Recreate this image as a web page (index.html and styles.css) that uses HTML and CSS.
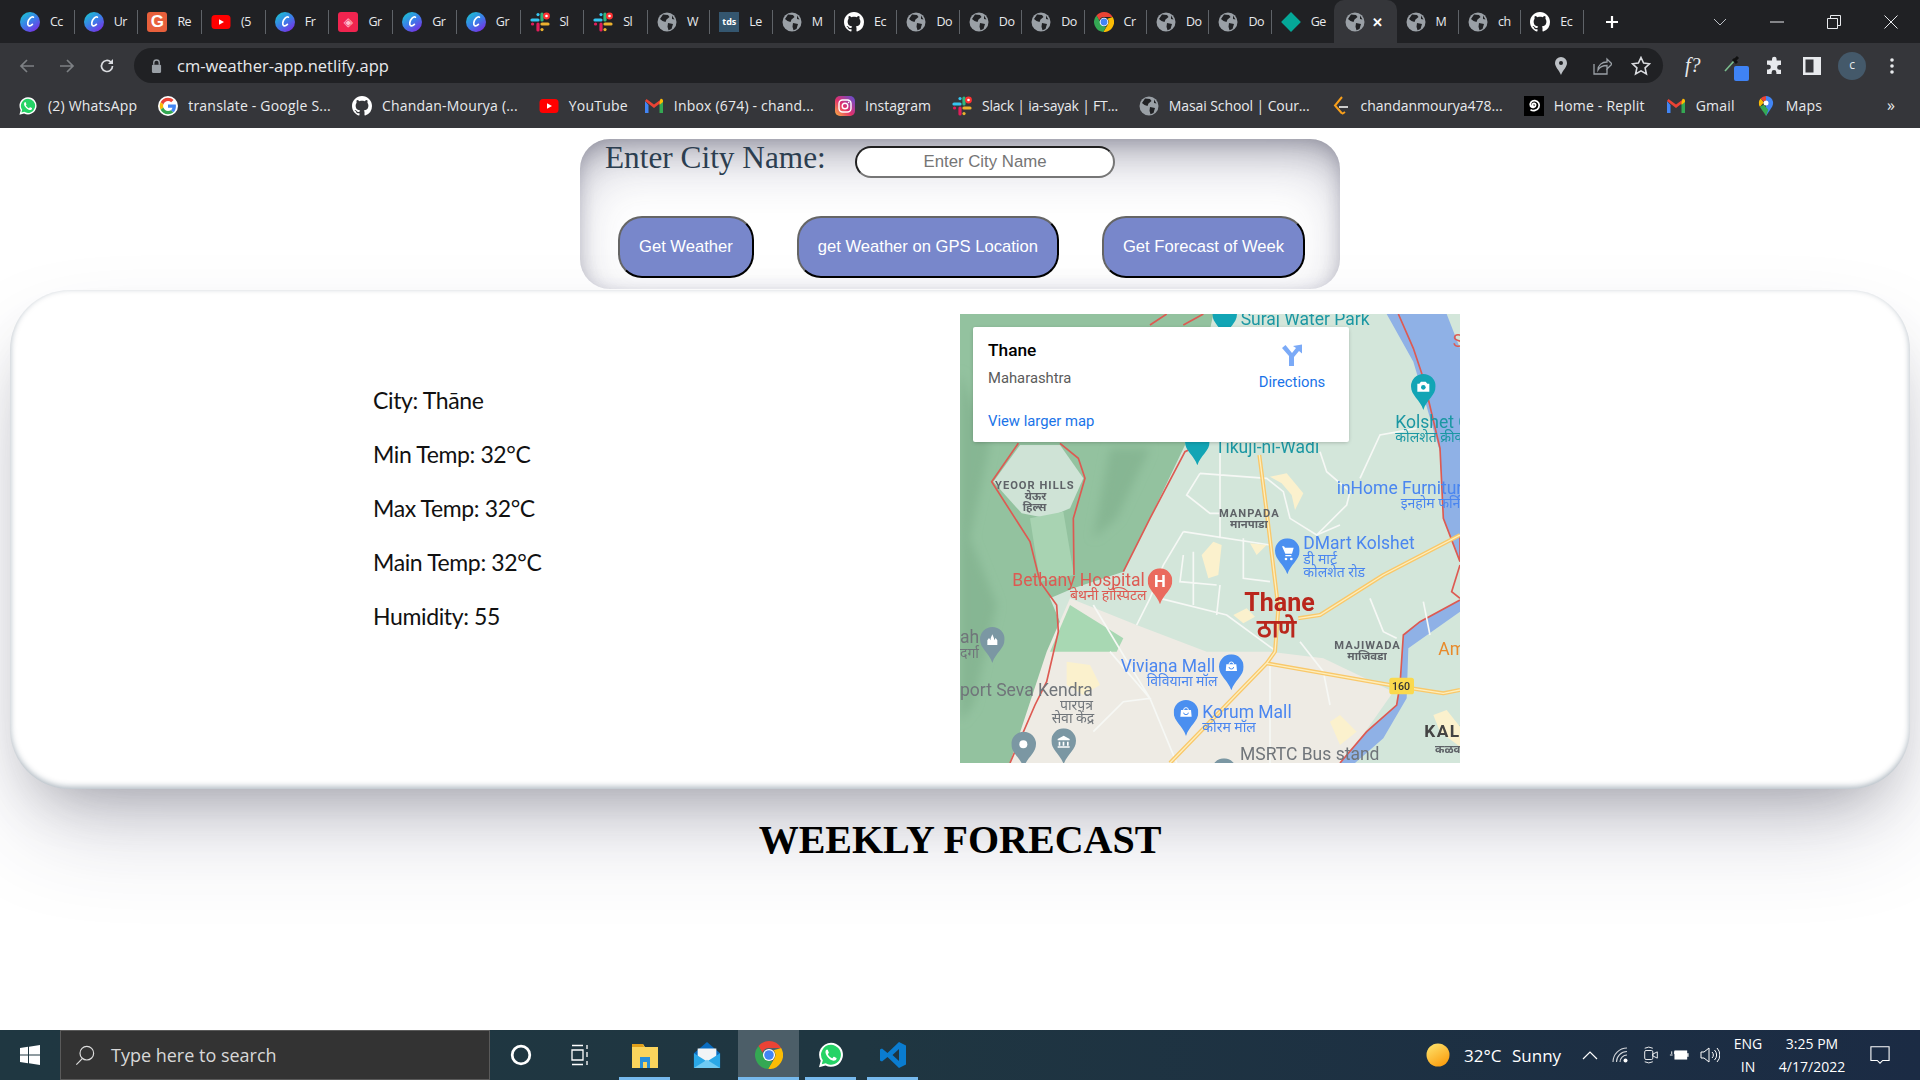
FILE: index.html
```html
<!DOCTYPE html>
<html lang="en">
<head>
<meta charset="utf-8">
<title>Weather App</title>
<link rel="stylesheet" href="styles.css">
</head>
<body>
<svg class="defs" width="0" height="0" aria-hidden="true">
  <defs>
    <filter id="soft" x="-20%" y="-20%" width="140%" height="140%"><feGaussianBlur stdDeviation="14"/></filter>
    <linearGradient id="canvaG" x1="0.1" y1="0" x2="0.8" y2="1"><stop offset="0" stop-color="#19c8cf"/><stop offset="0.5" stop-color="#3a7fe8"/><stop offset="1" stop-color="#7b2be3"/></linearGradient>
    <linearGradient id="igG" x1="0" y1="1" x2="1" y2="0"><stop offset="0" stop-color="#fdb442"/><stop offset="0.45" stop-color="#e1306c"/><stop offset="1" stop-color="#5b51d8"/></linearGradient>
    <linearGradient id="sunG" x1="0.2" y1="0" x2="0.8" y2="1"><stop offset="0" stop-color="#fde16a"/><stop offset="1" stop-color="#fb9a0a"/></linearGradient>
    <symbol id="canva" viewBox="0 0 20 20"><circle cx="10" cy="10" r="10" fill="url(#canvaG)"/><path d="M13.4 5.2C11.6 3.8 8.4 7.2 7.8 10.6c-.5 3 1.6 4.6 4.6 1.8" fill="none" stroke="#fff" stroke-width="1.7" stroke-linecap="round"/></symbol>
    <symbol id="globe" viewBox="0 0 20 20"><circle cx="10" cy="10" r="9.5" fill="#9aa0a6"/><path d="M6 2.5l5 .5 1.5 2-3 2.5-1 2.5-3-1L3 7zM11 11l5 1-1.5 5-3 1.2-1-3.5zM15 3.5l2.5 4-2.5-.6z" fill="#202124"/></symbol>
    <symbol id="github" viewBox="0 0 16 16"><path fill="#fff" d="M8 0C3.58 0 0 3.58 0 8c0 3.54 2.29 6.53 5.47 7.59.4.07.55-.17.55-.38 0-.19-.01-.82-.01-1.49-2.01.37-2.53-.49-2.69-.94-.09-.23-.48-.94-.82-1.13-.28-.15-.68-.52-.01-.53.63-.01 1.08.58 1.23.82.72 1.21 1.87.87 2.33.66.07-.52.28-.87.51-1.07-1.78-.2-3.64-.89-3.64-3.95 0-.87.31-1.59.82-2.15-.08-.2-.36-1.02.08-2.12 0 0 .67-.21 2.2.82.64-.18 1.32-.27 2-.27.68 0 1.36.09 2 .27 1.53-1.04 2.2-.82 2.2-.82.44 1.1.16 1.92.08 2.12.51.56.82 1.27.82 2.15 0 3.07-1.87 3.75-3.65 3.95.29.25.54.73.54 1.48 0 1.07-.01 1.93-.01 2.2 0 .21.15.46.55.38A8.013 8.013 0 0016 8c0-4.42-3.58-8-8-8z"/></symbol>
    <symbol id="google" viewBox="-5 -5 58 58"><circle cx="24" cy="24" r="29" fill="#fff"/><path fill="#EA4335" d="M24 9.5c3.54 0 6.71 1.22 9.21 3.6l6.85-6.85C35.9 2.38 30.47 0 24 0 14.62 0 6.51 5.38 2.56 13.22l7.98 6.19C12.43 13.72 17.74 9.5 24 9.5z"/><path fill="#4285F4" d="M46.98 24.55c0-1.57-.15-3.09-.38-4.55H24v9.02h12.94c-.58 2.96-2.26 5.48-4.78 7.18l7.73 6c4.51-4.18 7.09-10.36 7.09-17.65z"/><path fill="#FBBC05" d="M10.53 28.59c-.48-1.45-.76-2.99-.76-4.59s.27-3.14.76-4.59l-7.98-6.19C.92 16.46 0 20.12 0 24c0 3.88.92 7.54 2.56 10.78l7.97-6.19z"/><path fill="#34A853" d="M24 48c6.48 0 11.93-2.13 15.89-5.81l-7.73-6c-2.15 1.45-4.92 2.3-8.16 2.3-6.26 0-11.57-4.22-13.47-9.91l-7.98 6.19C6.51 42.62 14.62 48 24 48z"/></symbol>
    <symbol id="yt" viewBox="0 0 20 20"><rect x="0.5" y="3" width="19" height="14" rx="3.5" fill="#f00"/><path d="M8 7.2v5.6l5-2.8z" fill="#fff"/></symbol>
    <symbol id="slack" viewBox="0 0 20 20"><g fill="none" stroke-width="3.2" stroke-linecap="round"><path d="M2 8h6" stroke="#36c5f0"/><path d="M8 2.5v.1" stroke="#36c5f0"/><path d="M12 2v6" stroke="#2eb67d"/><path d="M12 12h6" stroke="#ecb22e"/><path d="M12 17.5v.1" stroke="#ecb22e"/><path d="M8 12v6" stroke="#e01e5a"/><path d="M2.5 12h.1" stroke="#e01e5a"/></g><circle cx="16.5" cy="4" r="3.4" fill="#f33"/><circle cx="16.5" cy="4" r="1.3" fill="#fff"/></symbol>
    <symbol id="gmail" viewBox="0 0 20 20"><path d="M1 5v12h3.5V9z" fill="#4285f4"/><path d="M15.5 9v8H19V5z" fill="#34a853"/><path d="M1 5l9 7 9-7-1.5-2L10 8.5 2.5 3z" fill="#ea4335"/><path d="M15.5 6.5V9L19 6V5c0-2-1.5-2.5-2.5-2z" fill="#fbbc04"/></symbol>
    <symbol id="wa" viewBox="0 0 24 24"><path d="M12 1.5A10.3 10.3 0 0 0 3.2 17L1.7 22.5l5.6-1.5A10.3 10.3 0 1 0 12 1.5z" fill="#fff"/><path d="M12 3.3a8.5 8.5 0 0 0-7 13.3l-.9 3.3 3.4-.9A8.5 8.5 0 1 0 12 3.3z" fill="#25d366"/><path d="M8.7 7.2c-.3 0-.8.2-1.1.8-.6 1.2-.5 2.9 1 5 1.6 2.3 3.7 3.6 5.6 3.9 1.2.1 2.2-.5 2.5-1.4.2-.5.1-.9 0-1l-2-1c-.2-.1-.4 0-.5.1l-.8 1c-.1.2-.3.2-.5.1-1.6-.7-2.7-1.8-3.5-3.2-.1-.2 0-.3.1-.5l.6-.7c.1-.2.1-.3 0-.5l-.8-2c-.2-.5-.4-.6-.6-.6z" fill="#fff"/></symbol>
    <symbol id="chrome" viewBox="0 0 24 24"><path d="M12 0a12 12 0 0 1 10.4 6H12a6 6 0 0 0-5.7 4.1L3 4.2A12 12 0 0 1 12 0z" fill="#ea4335"/><path d="M22.4 6A12 12 0 0 1 11.2 24l5.4-9A6 6 0 0 0 16 8z" fill="#fbbc04"/><path d="M3 4.2l5 8.8a6 6 0 0 0 7 4.2L11.2 24A12 12 0 0 1 3 4.2z" fill="#34a853"/><circle cx="12" cy="12" r="5.2" fill="#fff"/><circle cx="12" cy="12" r="4.1" fill="#4285f4"/></symbol>
    <symbol id="ig" viewBox="0 0 20 20"><rect width="20" height="20" rx="5" fill="url(#igG)"/><rect x="4" y="4" width="12" height="12" rx="3.5" fill="none" stroke="#fff" stroke-width="1.4"/><circle cx="10" cy="10" r="2.8" fill="none" stroke="#fff" stroke-width="1.4"/><circle cx="13.6" cy="6.4" r=".8" fill="#fff"/></symbol>
    <symbol id="leet" viewBox="0 0 20 20"><path d="M11 1L4 9.5l7 8" fill="none" stroke="#f89f1b" stroke-width="2"/><path d="M8 11h9" stroke="#ccc" stroke-width="2"/><path d="M14 16l-3 2" stroke="#f89f1b" stroke-width="2"/></symbol>
    <symbol id="replit" viewBox="0 0 20 20"><rect width="20" height="20" fill="#000"/><path d="M10 10.5a1.6 1.6 0 1 1 1.6-1.6c0 2.5-3.6 3.4-5 1.2C5.2 7.5 7.6 4.2 11 4.6c3.4.4 5.2 4 3.7 7-1.5 3-5.6 4-8.2 2" fill="none" stroke="#fff" stroke-width="1.8"/></symbol>
    <symbol id="maps" viewBox="0 0 20 24"><path d="M10 0a8.5 8.5 0 0 1 7.3 12.8L10 24z" fill="#4285f4"/><path d="M10 0a8.5 8.5 0 0 0-6.5 3l3.7 3.6L10 5z" fill="#ea4335"/><path d="M3.5 3A8.5 8.5 0 0 0 2.7 12.8l4.7-5z" fill="#fbbc04"/><path d="M2.7 12.800C5 17 8 20 10 24l2.8-7.500-5.400-6z" fill="#34a853"/><circle cx="10" cy="8.5" r="3" fill="#fff"/></symbol>
    <symbol id="pin" viewBox="0 0 74 108"><path d="M37 0a37 37 0 0 1 37 37c0 28-27 40-37 71C27 77 0 65 0 37A37 37 0 0 1 37 0z"/></symbol>
    <symbol id="bag" viewBox="0 0 36 32"><path d="M3 10h30l2 20H1z" fill="#fff"/><path d="M11 10a7 7 0 0 1 14 0" fill="none" stroke="#fff" stroke-width="3"/><path d="M11 18a7 6 0 0 0 14 0" fill="none" stroke="#4a8ff0" stroke-width="3"/></symbol>
  </defs>
</svg>

<header class="chrome">
  <div class="tabstrip">
    <div class="tab"><svg class="fav"><use href="#canva"/></svg><span class="tabname">Cc</span></div>
    <div class="tab"><svg class="fav"><use href="#canva"/></svg><span class="tabname">Ur</span></div>
    <div class="tab"><span class="fav gsq">G</span><span class="tabname">Re</span></div>
    <div class="tab"><svg class="fav"><use href="#yt"/></svg><span class="tabname">(5</span></div>
    <div class="tab"><svg class="fav"><use href="#canva"/></svg><span class="tabname">Fr</span></div>
    <div class="tab"><span class="fav pinksq">◈</span><span class="tabname">Gr</span></div>
    <div class="tab"><svg class="fav"><use href="#canva"/></svg><span class="tabname">Gr</span></div>
    <div class="tab"><svg class="fav"><use href="#canva"/></svg><span class="tabname">Gr</span></div>
    <div class="tab"><svg class="fav"><use href="#slack"/></svg><span class="tabname">Sl</span></div>
    <div class="tab"><svg class="fav"><use href="#slack"/></svg><span class="tabname">Sl</span></div>
    <div class="tab"><svg class="fav"><use href="#globe"/></svg><span class="tabname">W</span></div>
    <div class="tab"><span class="fav tds">tds</span><span class="tabname">Le</span></div>
    <div class="tab"><svg class="fav"><use href="#globe"/></svg><span class="tabname">M</span></div>
    <div class="tab"><svg class="fav"><use href="#github"/></svg><span class="tabname">Ec</span></div>
    <div class="tab"><svg class="fav"><use href="#globe"/></svg><span class="tabname">Do</span></div>
    <div class="tab"><svg class="fav"><use href="#globe"/></svg><span class="tabname">Do</span></div>
    <div class="tab"><svg class="fav"><use href="#globe"/></svg><span class="tabname">Do</span></div>
    <div class="tab"><svg class="fav"><use href="#chrome"/></svg><span class="tabname">Cr</span></div>
    <div class="tab"><svg class="fav"><use href="#globe"/></svg><span class="tabname">Do</span></div>
    <div class="tab"><svg class="fav"><use href="#globe"/></svg><span class="tabname">Do</span></div>
    <div class="tab tab-noline"><span class="fav diamond"></span><span class="tabname">Ge</span></div>
    <div class="tab tab-active"><svg class="fav"><use href="#globe"/></svg><span class="tabclose">✕</span></div>
    <div class="tab"><svg class="fav"><use href="#globe"/></svg><span class="tabname">M</span></div>
    <div class="tab"><svg class="fav"><use href="#globe"/></svg><span class="tabname">ch</span></div>
    <div class="tab"><svg class="fav"><use href="#github"/></svg><span class="tabname">Ec</span></div>
    <svg class="newtab" viewBox="0 0 16 16"><path d="M8 2v12M2 8h12" stroke="#fff" stroke-width="2.2"/></svg>
    <div class="winctl">
      <svg class="wc wc-chev" viewBox="0 0 14 8"><path d="M1 1l6 6 6-6" fill="none" stroke="#bdc1c6"/></svg>
      <svg class="wc wc-min" viewBox="0 0 14 14"><path d="M0 7h14" stroke="#e8eaed"/></svg>
      <svg class="wc wc-max" viewBox="0 0 14 14"><path d="M.5 3.5h10v10H.5zM3.5 3V.5h10v10H11" fill="none" stroke="#e8eaed"/></svg>
      <svg class="wc wc-close" viewBox="0 0 14 14"><path d="M.5.5l13 13M13.5.5l-13 13" stroke="#e8eaed"/></svg>
    </div>
  </div>

  <div class="toolbar">
    <svg class="navbtn" viewBox="0 0 16 16"><path d="M15 8H2M8 2L2 8l6 6" fill="none" stroke="#7d8084" stroke-width="1.7"/></svg>
    <svg class="navbtn" viewBox="0 0 16 16"><path d="M1 8h13M8 2l6 6-6 6" fill="none" stroke="#7d8084" stroke-width="1.7"/></svg>
    <svg class="navbtn" viewBox="0 0 16 16"><path d="M13.5 8a5.5 5.5 0 1 1-1.6-3.9" fill="none" stroke="#dadce0" stroke-width="1.7"/><path d="M14 1v5H9z" fill="#dadce0"/></svg>
    <div class="omnibox">
      <svg class="lock" viewBox="0 0 12 15"><path d="M3 6V4a3 3 0 0 1 6 0v2" fill="none" stroke="#9aa0a6" stroke-width="1.5"/><rect x="1" y="6" width="10" height="9" rx="1.2" fill="#9aa0a6"/></svg>
      <span class="url">cm-weather-app.netlify.app</span>
      <svg class="omni-ic omni-pin" viewBox="0 0 12 18"><path d="M6 0a6 6 0 0 1 6 6c0 4-4 7-6 12C4 13 0 10 0 6a6 6 0 0 1 6-6z" fill="#bdc1c6"/><circle cx="6" cy="6" r="2" fill="#202124"/></svg>
      <svg class="omni-ic omni-share" viewBox="0 0 20 20"><path d="M2 8v10h13v-5" fill="none" stroke="#9aa0a6" stroke-width="1.3"/><path d="M6 14c0-5 4-8 9-8V3l5 5-5 5V9.5c-4 0-7 1-9 4.5z" fill="none" stroke="#9aa0a6" stroke-width="1.3"/></svg>
      <svg class="omni-ic omni-star" viewBox="0 0 20 20"><path d="M10 1.5l2.6 5.6 6 .7-4.500 4.100 1.300 6.100-5.400-3.100-5.400 3.100 1.300-6.100L1.400 7.800l6-.7z" fill="none" stroke="#dadce0" stroke-width="1.6"/></svg>
    </div>
    <div class="exts">
      <span class="fq">f?</span>
      <span class="dropper"><svg class="dropper-ic" viewBox="0 0 18 18"><path d="M2 16L11 6" stroke="#7bbd8d" stroke-width="1.6"/><path d="M10 4l4 4M12 5l3-3" stroke="#111" stroke-width="3"/></svg><span class="bluesq"></span></span>
      <svg class="ext-ic puzzle" viewBox="0 0 20 20"><path d="M7 3a2.3 2.3 0 0 1 4.600 0v1.500H16V9h-1.500a2.400 2.400 0 0 0 0 4.800H16V18h-4.600v-1.500a2.400 2.400 0 0 0-4.800 0V18H2v-4.500h1.500a2.400 2.400 0 0 0 0-4.800H2V4.500h5z" fill="#e8eaed"/></svg>
      <svg class="ext-ic side" viewBox="0 0 18 18"><path d="M0 0h18v18H0zM2.500 2.500v13h8v-13z" fill="#e8eaed" fill-rule="evenodd"/></svg>
      <span class="avatar">c</span>
      <svg class="ext-ic menu" viewBox="0 0 4 16"><circle cx="2" cy="2" r="1.8" fill="#e8eaed"/><circle cx="2" cy="8" r="1.8" fill="#e8eaed"/><circle cx="2" cy="14" r="1.8" fill="#e8eaed"/></svg>
    </div>
  </div>

  <nav class="bookmarks">
    <a class="bm"><svg class="fav"><use href="#wa"/></svg>(2) WhatsApp</a>
    <a class="bm"><svg class="fav"><use href="#google"/></svg>translate - Google S...</a>
    <a class="bm"><svg class="fav"><use href="#github"/></svg>Chandan-Mourya (...</a>
    <a class="bm"><svg class="fav"><use href="#yt"/></svg>YouTube</a>
    <a class="bm bm-inbox"><svg class="fav"><use href="#gmail"/></svg>Inbox (674) - chand...</a>
    <a class="bm bm-ig"><svg class="fav"><use href="#ig"/></svg>Instagram</a>
    <a class="bm bm-slack"><svg class="fav"><use href="#slack"/></svg>Slack | ia-sayak | FT...</a>
    <a class="bm bm-masai"><svg class="fav"><use href="#globe"/></svg>Masai School | Cour...</a>
    <a class="bm bm-leet"><svg class="fav"><use href="#leet"/></svg>chandanmourya478...</a>
    <a class="bm"><svg class="fav"><use href="#replit"/></svg>Home - Replit</a>
    <a class="bm"><svg class="fav"><use href="#gmail"/></svg>Gmail</a>
    <a class="bm"><svg class="fav"><use href="#maps"/></svg>Maps</a>
    <span class="bm-more">»</span>
  </nav>
</header>

<main class="page">
  <form class="search">
    <div class="search-row">
      <label class="search-label">Enter City Name:</label>
      <input class="search-input" type="text" placeholder="Enter City Name">
    </div>
    <div class="search-btns">
      <button class="btn" type="button">Get Weather</button>
      <button class="btn" type="button">get Weather on GPS Location</button>
      <button class="btn" type="button">Get Forecast of Week</button>
    </div>
  </form>

  <section class="card">
    <div class="details">
      <p>City: Thāne</p>
      <p>Min Temp: 32°C</p>
      <p>Max Temp: 32°C</p>
      <p>Main Temp: 32°C</p>
      <p>Humidity: 55</p>
    </div>
    <div class="map">
      <svg class="map-svg" viewBox="30 27 1500 1347" preserveAspectRatio="none">
        <rect x="30" y="27" width="1500" height="1347" fill="#d3e6da"/>
        <path d="M30 27H790L705 420 600 640 520 800 370 850 300 880 350 1000 300 1040 180 1374H30z" fill="#93c29f"/>
        <path d="M30 200L120 420 60 700 140 900 70 1200 30 1250zM480 430L600 430 500 640 430 700z" fill="#86b693" filter="url(#soft)"/>
        <path d="M210 420H330L400 520 360 610 290 640 215 625 130 530z" fill="#cfe3d6"/>
        <path d="M240 640L340 620 372 810 270 830z" fill="#a8d3b2"/>
        <path d="M360 880L560 960 770 1040 960 1040 1120 1060 1330 1160 1180 1374H180L290 1040z" fill="#eeebe4"/>
        <path d="M300 1040L360 900 520 1000 500 1040z" fill="#a8d8b3"/>
        <path d="M1310 27H1490L1530 130V770L1480 640 1470 440 1390 170z" fill="#8fb1e6"/>
        <path d="M1530 885L1410 950 1360 990 1350 1140 1340 1200 1250 1280 1170 1374H1215L1300 1300 1370 1180 1375 1030 1530 920z" fill="#8fb1e6"/>
        <g fill="none" stroke="#dd5a52" stroke-width="5">
          <path d="M1345 27L1390 130 1420 220 1470 430 1480 640 1530 770 1530 690"/>
          <path d="M1530 885L1410 950 1360 990 1350 1140 1340 1200 1250 1280 1170 1374"/>
          <path d="M1530 780L1505 860 1530 880"/>
          <path d="M790 400L705 440 600 640 520 800M205 415L125 530 240 710 270 830 320 900 325 980 290 1130 255 1200 180 1374"/>
          <path d="M330 415L385 460 405 520 370 640 372 810"/>
          <path d="M600 60L650 27M700 60L760 27"/>
        </g>
        <g fill="none" stroke="#f6f8f5" stroke-width="5">
          <path d="M810 440V700M700 680L640 780 600 880 560 960M700 680L960 720M750 505L710 570 780 625 810 625M750 505L950 520 1000 560 1020 640 1100 690 1190 600 1200 560 1130 500 1110 440"/>
          <path d="M630 880L830 930 980 1040M430 900L520 1050 600 1180 680 1374M1050 1010L1120 1100 1140 1200M1260 880L1300 980 1340 1000M1230 520L1290 390 1400 370M1100 690L1170 660M880 700V820L960 830M810 840L800 930M730 740V900M700 750L690 830 800 840M1420 890L1440 990M480 1040L600 1180 520 1190 430 1280M960 1080L960 1374"/>
        </g>
        <path d="M350 1070l70 10 30 60-50 30-50-30zM790 710l25 10-10 90-30 10-20-70zM900 715l50 5-30 30zM850 930l40-20 25 25-35 20zM960 515l50-10 50 60-25 50-10-45-30-35zM1140 1250l30-20 50 50-50 40zM1450 1230l40-15 40 50v60l-60-45z" fill="#fbf1cd"/>
        <g fill="none" stroke="#f9c86a" stroke-width="12" stroke-linejoin="round">
          <path d="M928 450L950 620 985 910 975 1040 950 1075 660 1374"/>
          <path d="M950 1075L1320 1140 1480 1165 1530 1155"/>
          <path d="M1045 940L1110 930 1300 810 1530 690"/>
        </g>
        <g fill="none" stroke="#fdeebd" stroke-width="4">
          <path d="M928 450L950 620 985 910 975 1040 950 1075 660 1374"/>
          <path d="M950 1075L1320 1140 1480 1165 1530 1155"/>
          <path d="M1045 940L1110 930 1300 810 1530 690"/>
        </g>
        <use href="#pin" x="787" y="-10" width="74" height="108" fill="#12a5b5"/>
        <use href="#pin" x="1383" y="207" width="74" height="108" fill="#12a5b5"/>
        <use href="#pin" x="705" y="373" width="74" height="108" fill="#12a5b5"/>
        <use href="#pin" x="975" y="700" width="74" height="108" fill="#4a8ff0"/>
        <use href="#pin" x="593" y="790" width="74" height="108" fill="#ea6a5e"/>
        <use href="#pin" x="90" y="966" width="74" height="108" fill="#7b97a3"/>
        <use href="#pin" x="807" y="1048" width="74" height="108" fill="#4a8ff0"/>
        <use href="#pin" x="671" y="1185" width="74" height="108" fill="#4a8ff0"/>
        <use href="#pin" x="184" y="1280" width="74" height="108" fill="#7b97a3"/>
        <use href="#pin" x="304" y="1270" width="74" height="108" fill="#7b97a3"/>
        <use href="#pin" x="785" y="1360" width="74" height="108" fill="#7b97a3"/>
        <circle cx="220" cy="1318" r="12" fill="#fff"/>
        <path d="M341 1292l18 10v4h-36v-4zM326 1310h5v12h-5zM338 1310h5v12h-5zM351 1310h5v12h-5zM323 1324h36v4h-36z" fill="#fff"/>
        <path d="M112 1020v-14l5-7 5 7v-6l5-12 5 12v6l5-7 5 7v14z" fill="#fff"/>
        <path d="M1408 236l5-6h14l5 6h6v24h-36v-24z" fill="#fff"/><circle cx="1420" cy="247" r="7" fill="#12a5b5"/>
        <path d="M996 724h6l3 4h26l-5 18h-20zM1006 750h18v4h-18z" fill="#fff"/><circle cx="1008" cy="762" r="4" fill="#fff"/><circle cx="1024" cy="762" r="4" fill="#fff"/>
        <use href="#bag" x="826" y="1068" width="36" height="32"/>
        <use href="#bag" x="690" y="1205" width="36" height="32"/>
        <text x="630" y="845" class="m-pinH">H</text>
        <rect x="1318" y="1118" width="74" height="50" rx="8" fill="#fad94d"/>
        <text x="1326" y="1156" class="m-shield">160</text>
        <text x="872" y="60" class="m-l m-teal">Suraj Water Park</text>
        <text x="795" y="445" class="m-l m-teal">Tikuji-ni-Wadi</text>
        <text x="1336" y="370" class="m-l m-teal">Kolshet Creek</text>
        <text x="1336" y="412" class="m-s m-teal">कोलशेत क्रीक</text>
        <text x="1160" y="568" class="m-l m-blue">inHome Furniture</text>
        <text x="1352" y="610" class="m-s m-blue">इनहोम फर्निचर</text>
        <text x="1060" y="732" class="m-l m-blue">DMart Kolshet</text>
        <text x="1060" y="776" class="m-s m-blue">डी मार्ट</text>
        <text x="1060" y="816" class="m-s m-blue">कोलशेत रोड</text>
        <text x="187" y="843" class="m-l m-red">Bethany Hospital</text>
        <text x="360" y="885" class="m-s m-red">बेथनी हॉस्पिटल</text>
        <text x="883" y="918" class="m-city">Thane</text>
        <text x="922" y="995" class="m-city">ठाणे</text>
        <text x="135" y="552" class="m-area">YEOOR HILLS</text>
        <text x="224" y="584" class="m-areas">येऊर</text>
        <text x="218" y="618" class="m-areas">हिल्स</text>
        <text x="807" y="637" class="m-area">MANPADA</text>
        <text x="840" y="668" class="m-areas">मानपाडा</text>
        <text x="1153" y="1033" class="m-area">MAJIWADA</text>
        <text x="1192" y="1066" class="m-areas">माजिवडा</text>
        <text x="512" y="1102" class="m-l m-blue">Viviana Mall</text>
        <text x="590" y="1144" class="m-s m-blue">विवियाना मॉल</text>
        <text x="30" y="1172" class="m-l m-gray">port Seva Kendra</text>
        <text x="330" y="1214" class="m-s m-gray">पारपत्र</text>
        <text x="305" y="1254" class="m-s m-gray">सेवा केंद्र</text>
        <text x="757" y="1240" class="m-l m-blue">Korum Mall</text>
        <text x="757" y="1280" class="m-s m-blue">कोरम मॉल</text>
        <text x="870" y="1366" class="m-l m-gray">MSRTC Bus stand</text>
        <text x="1423" y="1295" class="m-kal">KALWA</text>
        <text x="1455" y="1345" class="m-areas">कळवा</text>
        <text x="1465" y="1050" class="m-l m-orange">Amar</text>
        <text x="30" y="1015" class="m-l m-gray">ah</text>
        <text x="30" y="1060" class="m-s m-gray">दर्गा</text>
        <text x="1508" y="125" class="m-l m-red">S</text>
      </svg>
      <div class="infocard">
        <div class="info-main">
          <div class="info-title">Thane</div>
          <div class="info-sub">Maharashtra</div>
        </div>
        <div class="info-dir">
          <svg class="dir-ic" viewBox="0 0 24 24"><path d="M9 23V13L2 5l3.500-3L12 10l4-5-3-2 9-1.500v9l-3-2.500-5 6v9z" fill="#7baaf7"/></svg>
          <span>Directions</span>
        </div>
        <a class="info-link">View larger map</a>
      </div>
    </div>
  </section>

  <h1 class="forecast-title">WEEKLY FORECAST</h1>
</main>

<footer class="taskbar">
  <div class="start"><svg class="winlogo" viewBox="0 0 20 20"><path d="M0 3l8-1.200v7.700H0zM9 1.700L20 0v9.500H9zM0 10.500h8v7.700L0 17zM9 10.500h11V20L9 18.300z" fill="#fff"/></svg></div>
  <div class="tsearch">
    <svg class="tsearch-ic" viewBox="0 0 22 22"><circle cx="13" cy="9" r="7.500" fill="none" stroke="#ddd" stroke-width="1.300"/><path d="M8 15L1.500 21.500" stroke="#ddd" stroke-width="1.300"/></svg>
    <span>Type here to search</span>
  </div>
  <div class="tapps">
    <div class="tapp"><svg class="tapp-ic" viewBox="0 0 20 20"><circle cx="10" cy="10" r="8" fill="none" stroke="#fff" stroke-width="2.500"/></svg></div>
    <div class="tapp tapp-view"><svg class="tapp-ic" viewBox="0 0 20 22"><path d="M2 1.500h11M2 20.500h11M2 6h11v10H2zM17 1v4M17 8v5M17 17v4" fill="none" stroke="#fff" stroke-width="1.300"/></svg></div>
    <div class="tapp tapp-on"><svg class="tapp-ic big" viewBox="0 0 28 28"><path d="M1 3h11l2 3h13v21H1z" fill="#fbd45c"/><path d="M1 3h11l1 3H1z" fill="#e09f1a"/><path d="M9 27V16h10v11h-3v-6h-4v6z" fill="#2a8fd8"/></svg></div>
    <div class="tapp"><svg class="tapp-ic big" viewBox="0 0 30 30"><path d="M15 1L1 13v16h28V13z" fill="#0a6cc0"/><path d="M5 8h20v9l-10 6-10-6z" fill="#f2f4f6"/><path d="M1 13l14 9 14-9v16H1z" fill="#2aa8e8"/><path d="M1 29l14-9 14 9z" fill="#6fcbf4"/></svg></div>
    <div class="tapp tapp-sel"><svg class="tapp-ic big" viewBox="0 0 24 24"><use href="#chrome"/></svg></div>
    <div class="tapp tapp-on"><svg class="tapp-ic big" viewBox="0 0 24 24"><use href="#wa"/></svg></div>
    <div class="tapp tapp-on"><svg class="tapp-ic big" viewBox="0 0 28 28"><path d="M20 1l7 3.500v19L20 27 8.500 16 3 20.500 1 19.500V8.500l2-1L8.500 12zM20 8l-6.500 6 6.500 6z" fill="#0a7cd0" fill-rule="evenodd"/></svg></div>
  </div>
  <div class="tray">
    <svg class="sun" viewBox="0 0 24 24"><circle cx="12" cy="12" r="11.500" fill="url(#sunG)"/></svg>
    <span class="t-temp">32°C</span>
    <span class="t-sunny">Sunny</span>
    <svg class="tr-ic tr-chev" viewBox="0 0 16 10"><path d="M1 9l7-7 7 7" fill="none" stroke="#fff" stroke-width="1.200"/></svg>
    <svg class="tr-ic tr-wifi" viewBox="0 0 18 16"><path d="M1 15A14 14 0 0 1 15 1M4.500 15A10.500 10.500 0 0 1 15 4.500M8 15a7 7 0 0 1 7-7" fill="none" stroke="#d5d8dc" stroke-width="1.100"/><circle cx="13.500" cy="13.500" r="2" fill="#fff"/></svg>
    <svg class="tr-ic tr-meet" viewBox="0 0 16 20"><rect x="1" y="5" width="9" height="10" rx="1.500" fill="none" stroke="#fff"/><path d="M10 9l5-2.500v7L10 11zM1 2.500a9 9 0 0 1 9 0M1 17.500a9 9 0 0 0 9 0" fill="none" stroke="#fff"/></svg>
    <svg class="tr-ic tr-batt" viewBox="0 0 22 14"><path d="M1 7h3M3 3v3M6 3v3" stroke="#fff"/><rect x="6" y="2" width="14" height="10" fill="#fff"/><rect x="20" y="5" width="1.500" height="4" fill="#fff"/></svg>
    <svg class="tr-ic tr-vol" viewBox="0 0 20 18"><path d="M1 6h3l5-4v14l-5-4H1z" fill="none" stroke="#fff"/><path d="M12 6a4 4 0 0 1 0 6M14.500 4a7 7 0 0 1 0 10M17 2a10 10 0 0 1 0 14" fill="none" stroke="#fff"/></svg>
    <div class="t-lang"><span>ENG</span><span>IN</span></div>
    <div class="t-clock"><span>3:25 PM</span><span>4/17/2022</span></div>
    <svg class="t-note" viewBox="0 0 22 20"><path d="M1 1h20v15h-7l-3 3-3-3H1z" fill="none" stroke="#fff" stroke-width="1.200"/></svg>
  </div>
</footer>
</body>
</html>
```

FILE: styles.css
```css
* { box-sizing: border-box; }
html, body { margin: 0; height: 100%; }
body {
  display: flex;
  flex-direction: column;
  height: 1080px;
  width: 1920px;
  overflow: hidden;
  background: #fff;
  font-family: "Open Sans", "Noto Sans", sans-serif;
}
.defs { display: block; height: 0; }

/* browser chrome */
.chrome { flex: none; background: #35363a; color: #e8eaed; }
.tabstrip {
  height: 43px;
  background: #202124;
  display: flex;
  align-items: center;
  padding-left: 11px;
}
.tab {
  flex: none;
  width: 62.4px;
  height: 24px;
  display: flex;
  align-items: center;
  gap: 10px;
  padding-left: 9px;
  border-right: 1px solid #5f6368;
}
.tab:nth-child(-n+10) { width: 63.7px; }
.tab-noline { border-right-color: transparent; }
.tab-active {
  align-self: stretch;
  height: 43px;
  background: #35363a;
  border: 0;
  border-radius: 10px 10px 0 0;
  gap: 7px;
  padding-left: 11px;
}
.fav { width: 20px; height: 20px; flex: none; display: block; }
.tabname { font-size: 12.5px; letter-spacing: -.5px; color: #e8eaed; white-space: nowrap; flex: none; }
.tabclose { font-size: 13px; font-weight: 700; color: #fff; }
.gsq { background: #e8603c; border-radius: 3px; color: #fff; font: 700 17px/20px "Liberation Sans", sans-serif; text-align: center; }
.pinksq { background: #f0244f; border-radius: 3px; color: #ffc2cf; font: 12px/20px "DejaVu Sans", sans-serif; text-align: center; }
.tds { background: #34566f; color: #fff; font: 700 9px/20px "Open Sans", sans-serif; text-align: center; }
.diamond { background: #05a898; width: 14px; height: 14px; transform: rotate(45deg); margin: 0 3px; }
.newtab { width: 16px; height: 16px; margin-left: 20px; flex: none; }
.winctl { margin-left: auto; display: flex; align-items: center; padding-right: 22px; gap: 43px; }
.wc { display: block; width: 14px; height: 14px; }
.wc-chev { height: 8px; }
.toolbar {
  height: 45px;
  display: flex;
  align-items: center;
  padding: 0 0 0 19px;
  gap: 24px;
}
.navbtn { width: 16px; height: 16px; flex: none; }
.omnibox {
  width: 1529px;
  height: 35px;
  margin-left: -5px;
  background: #202124;
  border-radius: 18px;
  display: flex;
  align-items: center;
  padding: 0 12px 0 17px;
}
.lock { width: 11px; height: 14px; flex: none; }
.url { margin-left: 15px; font-size: 16.5px; color: #e8eaed; }
.omni-ic { flex: none; }
.omni-pin { width: 12px; height: 18px; margin-left: auto; }
.omni-share { width: 20px; height: 20px; margin-left: 25px; }
.omni-star { width: 20px; height: 20px; margin-left: 19px; }
.exts { display: flex; align-items: center; flex: none; }
.fq { font: italic 20px "Liberation Serif", serif; color: #e8eaed; margin-left: -2px; width: 30px; }
.dropper { width: 30px; height: 30px; margin-left: 8px; position: relative; display: block; }
.dropper-ic { width: 18px; height: 18px; margin-top: 4px; display: block; }
.bluesq { position: absolute; left: 11px; top: 15px; width: 15px; height: 15px; background: #3f83f5; border-radius: 2px; }
.ext-ic { width: 20px; height: 20px; flex: none; }
.puzzle { margin-left: 12px; }
.side { width: 18px; height: 18px; margin-left: 18px; }
.avatar {
  width: 28px; height: 28px; border-radius: 50%; background: #44596a; color: #e8eaed;
  font-size: 12px; line-height: 26px; text-align: center; margin-left: 17px;
}
.menu { width: 4px; height: 16px; margin-left: 24px; }
.bookmarks {
  height: 40px;
  display: flex;
  align-items: flex-start;
  padding-left: 18px;
  padding-top: 8px;
  gap: 21px;
  position: relative;
}
.bm { display: flex; align-items: center; gap: 10px; font-size: 14px; line-height: 20px; color: #e8eaed; white-space: nowrap; letter-spacing: .2px; }
.bm-inbox { margin-left: -5px; }
.bm-ig { letter-spacing: 0; }
.bm-slack { letter-spacing: -.23px; }
.bm-masai { letter-spacing: -.1px; }
.bm-leet { letter-spacing: 0; }
.bm-more { position: absolute; left: 1887px; top: 6px; font-size: 16px; color: #e8eaed; }

/* page */
.page { flex: 1; min-height: 0; overflow: hidden; background: #fff; }
.search {
  width: 760px;
  height: 150px;
  margin: 11px auto 0;
  border-radius: 30px;
  box-shadow: rgba(50,50,93,.3) 0 30px 60px -12px inset, rgba(0,0,0,.32) 0 18px 36px -18px inset, rgba(50,50,93,.14) 0 0 16px 0 inset;
}
.search-row { display: flex; align-items: flex-start; padding-left: 25px; }
.search-label { font: 31.3px/38px "Liberation Serif", serif; color: #2c3e50; width: 250px; }
.search-input {
  width: 260px; height: 32px; margin-top: 7px;
  border: 2px inset #767676;
  border-radius: 16px;
  text-align: center;
  font: 16.8px "Liberation Sans", sans-serif;
  background: #fff;
}
.search-input::placeholder { color: #757575; }
.search-btns { display: flex; gap: 43px; padding-left: 38px; margin-top: 38px; }
.btn {
  height: 62px;
  padding: 0 19px;
  border: 2px outset #111;
  border-radius: 24px;
  background: #7887cb;
  color: #fff;
  font: 16.6px "Liberation Sans", sans-serif;
}
.card {
  width: 1900px;
  height: 499px;
  margin: 1px 0 0 10px;
  border-radius: 60px;
  display: flex;
  background: #fff;
  box-shadow: rgba(50,50,93,.25) 0 50px 100px -20px, rgba(0,0,0,.3) 0 30px 60px -30px, rgba(10,37,64,.35) 0 -2px 6px 0 inset;
}
.details {
  width: 950px;
  padding: 97px 0 0 363px;
  font: 23px/27px "Lato", sans-serif;
  letter-spacing: -.37px;
  color: #111;
}
.details p { margin: 0 0 27px; }
.map { width: 500px; height: 449px; margin-top: 24px; position: relative; overflow: hidden; }
.map-svg { display: block; width: 500px; height: 449px; filter: blur(.35px); }
.m-l { font: 400 52.5px "Roboto", sans-serif; }
.m-s { font: 400 42px "Roboto", "Noto Sans", sans-serif; }
.m-teal { fill: #1b97a3; }
.m-blue { fill: #4a86f0; }
.m-red { fill: #dd5a52; }
.m-gray { fill: #70757a; }
.m-orange { fill: #e88a2a; }
.m-city { font: 700 75px "Roboto", sans-serif; fill: #b9261c; }
.m-area { font: 700 33.5px "Roboto", sans-serif; fill: #5f6368; letter-spacing: 3px; }
.m-areas { font: 700 34px "Roboto", "Noto Sans", sans-serif; fill: #5f6368; }
.m-kal { font: 700 52px "Roboto", sans-serif; fill: #444; letter-spacing: 4px; }
.m-pinH { font: 700 50px "Roboto", sans-serif; fill: #fff; text-anchor: middle; }
.m-shield { font: 500 32px "Roboto", sans-serif; fill: #333; }
.infocard {
  position: absolute;
  left: 13px; top: 13px;
  width: 376px; height: 115px;
  background: #fff;
  border-radius: 2px;
  box-shadow: 0 1px 4px -1px rgba(0,0,0,.3);
  padding: 13px 22px 0 15px;
  display: grid;
  grid-template-columns: 1fr 70px;
  grid-template-rows: 67px auto;
  font-family: "Roboto", sans-serif;
}
.info-title { font-size: 17.3px; font-weight: 500; line-height: 20px; color: #000; }
.info-sub { font-size: 14.8px; line-height: 20px; margin-top: 8px; color: #5b5b5b; }
.info-dir { display: flex; flex-direction: column; align-items: center; font-size: 14.8px; color: #1a73e8; padding-top: 3px; white-space: nowrap; }
.dir-ic { width: 24px; height: 24px; margin-bottom: 6px; flex: none; }
.info-link { grid-column: 1 / 3; font-size: 14.8px; color: #1a73e8; margin-top: 5px; }
.forecast-title {
  margin: 28px 0 0;
  text-align: center;
  font: 700 40px/46px "Liberation Serif", serif;
  color: #000;
}

/* taskbar */
.taskbar {
  flex: none;
  height: 50px;
  display: flex;
  align-items: stretch;
  background: linear-gradient(90deg, #1f3741 0%, #1f3641 45%, #1b2b44 100%);
  color: #fff;
}
.start { width: 60px; display: flex; align-items: center; justify-content: center; }
.winlogo { width: 20px; height: 20px; }
.tsearch {
  width: 430px;
  background: #333;
  border: 1px solid #5a5a5a;
  display: flex;
  align-items: center;
  padding-left: 14px;
  gap: 16px;
  font-size: 18px;
  color: #d8d8d8;
}
.tsearch-ic { width: 20px; height: 20px; flex: none; }
.tapps { display: flex; }
.tapp { width: 61px; display: flex; align-items: center; justify-content: center; margin-right: 1px; }
.tapp-view { padding-right: 6px; }
.tapp-on { background: linear-gradient(#76b9ed, #76b9ed) center bottom / 51px 3px no-repeat; }
.tapp-sel { background: linear-gradient(#76b9ed, #76b9ed) center bottom / 61px 3px no-repeat, #4c5e68; }
.tapp-ic { width: 22px; height: 22px; }
.tapp-ic.big { width: 28px; height: 28px; }
.tray { margin-left: auto; display: flex; align-items: center; padding-right: 30px; }
.sun { width: 24px; height: 24px; margin-right: 14px; }
.t-temp { font-size: 17px; width: 48px; }
.t-sunny { font-size: 17px; width: 70px; }
.tr-ic { width: 18px; height: 18px; }
.tr-chev { width: 16px; height: 10px; margin-right: 14px; }
.tr-wifi { margin-right: 12px; }
.tr-meet { margin-right: 9px; }
.tr-batt { width: 20px; margin-right: 11px; }
.tr-vol { width: 20px; margin-right: 10px; }
.t-lang, .t-clock { display: flex; flex-direction: column; align-items: center; font-size: 14px; line-height: 23px; }
.t-lang { width: 36px; }
.t-clock { width: 74px; margin-left: 9px; white-space: nowrap; }
.t-note { width: 20px; height: 20px; margin-left: 21px; }
```
